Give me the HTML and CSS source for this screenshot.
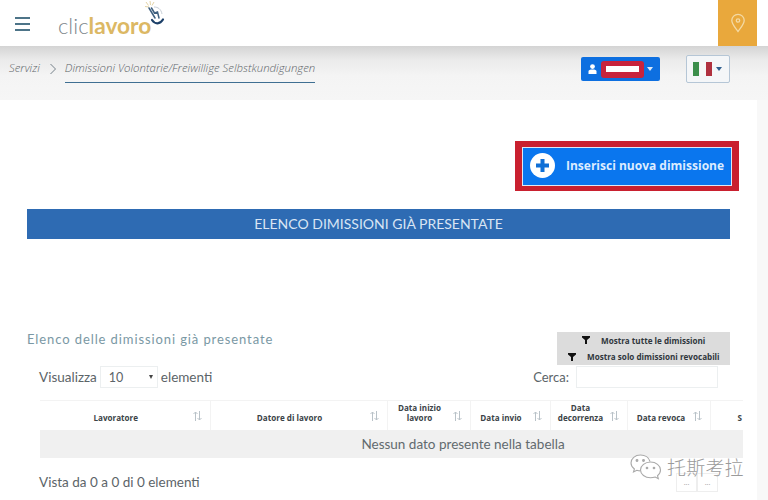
FILE: index.html
```html
<!DOCTYPE html>
<html lang="it">
<head>
<meta charset="utf-8">
<title>Cliclavoro</title>
<link rel="stylesheet" href="styles.css">
</head>
<body>
<header class="topbar">
  <button class="burger" aria-label="Menu"><span></span><span></span><span></span></button>
  <a class="logo"><span class="logo-clic">clic</span><span class="logo-lavoro">lavoro</span>
    <svg class="logo-mark" width="30" height="30" viewBox="0 0 30 30" fill="none">
      <path d="M10 1l.5 4M6 2l2.500 3.500M14 2l-2 3.500M5 6.500l4 .5" stroke="#e3d3a6" stroke-width="1"/>
      <path d="M9 8l6 10M11.500 8l3 5 3-1 1.500 6" stroke="#3f607f" stroke-width="1.500" stroke-linecap="round"/>
      <path d="M14 7c4 0 7 2 8 7" stroke="#c6ced6" stroke-width="1"/>
      <path d="M12 20c3 4.500 8 4.500 11-.5" stroke="#1c3f68" stroke-width="2.200" stroke-linecap="round"/>
    </svg>
  </a>
  <div class="pin">
    <svg width="16" height="20" viewBox="0 0 16 20" fill="none" stroke="#f3d9a4" stroke-width="1.300"><path d="M8 18.500C5 14.500 1.800 11 1.800 7.500a6.200 6.200 0 0 1 12.400 0C14.200 11 11 14.500 8 18.500z"/><circle cx="8" cy="7.500" r="1.700"/></svg>
  </div>
</header>

<nav class="crumbs">
  <span class="crumb-root">Servizi</span>
  <svg class="crumb-sep" width="8" height="12" viewBox="0 0 8 12" fill="none" stroke="#75818a" stroke-width="1"><path d="M1.500 1l5 5-5 5"/></svg>
  <span class="crumb-current">Dimissioni Volontarie/Freiwillige Selbstkundigungen</span>
  <div class="crumb-actions">
    <div class="user-btn">
      <svg width="9" height="10" viewBox="0 0 9 10" fill="#fff"><circle cx="4.500" cy="2.600" r="2.400"/><path d="M0.500 10V7.500C0.500 6 2 5.500 4.500 5.500S8.500 6 8.500 7.500V10z"/></svg>
      <span class="user-mask"><span class="user-mask-bar"></span></span>
      <span class="caret caret-white"></span>
    </div>
    <div class="flag-btn">
      <span class="flag"><span class="flag-g"></span><span class="flag-w"></span><span class="flag-r"></span></span>
      <span class="caret caret-dark"></span>
    </div>
  </div>
</nav>

<main class="content">
  <div class="action-row">
    <div class="new-frame">
      <button class="new-btn">
        <svg width="25" height="25" viewBox="0 0 25 25"><circle cx="12.500" cy="12.500" r="12.500" fill="#fff"/><path d="M12.500 6v13M6 12.500h13" stroke="#0f6fd6" stroke-width="4"/></svg>
        <span>Inserisci nuova dimissione</span>
      </button>
    </div>
  </div>

  <h1 class="band">ELENCO DIMISSIONI GIÀ PRESENTATE</h1>

  <div class="list-head">
    <h2 class="list-title">Elenco delle dimissioni già presentate</h2>
    <div class="filters">
      <div class="filter filter-a">
        <svg width="8" height="8" viewBox="0 0 8 8" fill="#111"><path d="M0 0h8v1.500L5 4v4H3V4L0 1.500z"/></svg>
        <span>Mostra tutte le dimissioni</span>
      </div>
      <div class="filter filter-b">
        <svg width="8" height="8" viewBox="0 0 8 8" fill="#111"><path d="M0 0h8v1.500L5 4v4H3V4L0 1.500z"/></svg>
        <span>Mostra solo dimissioni revocabili</span>
      </div>
    </div>
  </div>

  <div class="controls">
    <label class="ctl">Visualizza <span class="fake-select"><span>10</span><i class="mini-caret"></i></span> elementi</label>
    <label class="ctl ctl-search">Cerca: <span class="fake-input"></span></label>
  </div>

  <div class="table-wrap">
    <table class="grid">
      <colgroup>
        <col class="c1"><col class="c2"><col class="c3"><col class="c4"><col class="c5"><col class="c6"><col class="c7"><col class="c8">
      </colgroup>
      <thead>
        <tr>
          <th class="t1"><span>Lavoratore</span><svg class="sort" width="9" height="10" viewBox="0 0 9 10" fill="none" stroke="#b9c2c8"><path d="M2.500 10V1M.5 3l2-2 2 2M6.500 0v9M4.500 7l2 2 2-2"/></svg></th>
          <th class="t2"><span>Datore di lavoro</span><svg class="sort" width="9" height="10" viewBox="0 0 9 10" fill="none" stroke="#b9c2c8"><path d="M2.500 10V1M.5 3l2-2 2 2M6.500 0v9M4.500 7l2 2 2-2"/></svg></th>
          <th class="t3"><span>Data inizio<br>lavoro</span><svg class="sort" width="9" height="10" viewBox="0 0 9 10" fill="none" stroke="#b9c2c8"><path d="M2.500 10V1M.5 3l2-2 2 2M6.500 0v9M4.500 7l2 2 2-2"/></svg></th>
          <th class="t4"><span>Data invio</span><svg class="sort" width="9" height="10" viewBox="0 0 9 10" fill="none" stroke="#b9c2c8"><path d="M2.500 10V1M.5 3l2-2 2 2M6.500 0v9M4.500 7l2 2 2-2"/></svg></th>
          <th class="t5"><span>Data<br>decorrenza</span><svg class="sort" width="9" height="10" viewBox="0 0 9 10" fill="none" stroke="#b9c2c8"><path d="M2.500 10V1M.5 3l2-2 2 2M6.500 0v9M4.500 7l2 2 2-2"/></svg></th>
          <th class="t6"><span>Data revoca</span><svg class="sort" width="9" height="10" viewBox="0 0 9 10" fill="none" stroke="#b9c2c8"><path d="M2.500 10V1M.5 3l2-2 2 2M6.500 0v9M4.500 7l2 2 2-2"/></svg></th>
          <th class="t7"><span>S</span></th>
          <th class="t8"></th>
        </tr>
      </thead>
      <tbody>
        <tr><td colspan="8">Nessun dato presente nella tabella</td></tr>
      </tbody>
    </table>
  </div>

  <div class="foot">
    <span>Vista da 0 a 0 di 0 elementi</span>
    <div class="pager"><span>...</span><span>...</span></div>
  </div>
</main>

<div class="watermark">
  <svg width="32" height="26" viewBox="0 0 32 26" fill="#fff" stroke="#a9a9a9" stroke-width="1.100"><path d="M20 7.500C19 3.500 15 1 10.500 1 5 1 1 4.500 1 9c0 2.500 1.300 4.500 3.400 6l-.9 3 3.300-1.700c1.200.4 2.400.6 3.700.6"/><path d="M20.500 8c5.500 0 10 3.600 10 8 0 2.300-1.200 4.300-3 5.700l.8 3-3-1.700c-1.500.5-3.100.8-4.800.8-5.500 0-10-3.500-10-7.800S15 8 20.500 8z"/><circle cx="7" cy="6.500" r=".9" fill="#a9a9a9"/><circle cx="13.500" cy="6.500" r=".9" fill="#a9a9a9"/><circle cx="17" cy="14" r=".8" fill="#a9a9a9"/><circle cx="24" cy="14" r=".8" fill="#a9a9a9"/></svg>
  <span>托斯考拉</span>
</div>
</body>
</html>
```
FILE: styles.css
```css
* { box-sizing: border-box; }
html, body { height: 500px; overflow: hidden; }
body {
  margin: 0;
  position: relative;
  background: #f8f8f8;
  font-family: "Lato", "Liberation Sans", sans-serif;
  color: #5a6266;
}

/* top bar */
.topbar {
  display: flex;
  align-items: flex-start;
  height: 46px;
  padding-right: 11px;
  background: #fff;
}
.burger {
  display: flex;
  flex-direction: column;
  gap: 4px;
  width: 15px;
  margin: 17px 0 0 15px;
  padding: 0;
  border: 0;
  background: none;
}
.burger span { display: block; height: 2px; background: #4d7488; }
.logo {
  display: block;
  position: relative;
  margin: 12px 0 0 28px;
  font-size: 22px;
  line-height: 27px;
  white-space: nowrap;
}
.logo-clic { color: #80888d; font-weight: 300; }
.logo-lavoro { color: #dcb864; font-weight: 700; font-size: 22.700px; }
.logo-mark { position: absolute; left: 82px; top: -12px; }
.pin {
  margin-left: auto;
  width: 39px;
  height: 46px;
  background: #e9a83c;
  display: flex;
  align-items: center;
  justify-content: center;
}

/* breadcrumb */
.crumbs {
  display: flex;
  align-items: flex-start;
  height: 54px;
  padding: 0 38px 0 9px;
  background: linear-gradient(#d4d4d4 0, #ebebeb 14px, #f4f4f4 30px, #f6f6f6 100%);
  font-family: "Open Sans", sans-serif;
  font-style: italic;
  font-weight: 300;
  font-size: 11.400px;
  color: #5d6468;
}
.crumb-root { margin-top: 14px; }
.crumb-sep { margin: 17px 8px 0 9px; }
.crumb-current {
  margin-top: 14px;
  height: 23px;
  border-bottom: 1px solid #3f6f92;
  white-space: nowrap;
}
.crumb-actions {
  margin-left: auto;
  display: flex;
  align-items: center;
  gap: 26px;
  padding-top: 9px;
}
.user-btn {
  display: flex;
  align-items: center;
  width: 79px;
  height: 24px;
  padding-left: 7px;
  background: #0d6fe0;
  border-radius: 2px;
}
.user-mask {
  display: flex;
  align-items: center;
  justify-content: center;
  width: 43px;
  height: 17px;
  margin-left: 4px;
  background: #c8233c;
  border-radius: 3px;
}
.user-mask-bar { width: 33px; height: 6px; background: #fff; }
.caret {
  width: 0;
  height: 0;
  border-left: 3.500px solid transparent;
  border-right: 3.500px solid transparent;
  border-top: 4px solid;
}
.caret-white { color: #dce9f8; margin-left: 3px; }
.caret-dark { color: #2f5f8f; margin-left: 4px; }
.flag-btn {
  display: flex;
  align-items: center;
  width: 44px;
  height: 28px;
  padding-left: 6px;
  background: #f4f6f8;
  border: 1px solid #b5c6d6;
  border-radius: 2px;
}
.flag { display: flex; height: 14px; width: 19px; }
.flag span { flex: 1; }
.flag-g { background: #3c8f4c; }
.flag-w { background: #f7f7f7; }
.flag-r { background: #b0313f; }

/* content */
.content {
  height: 400px;
  margin-right: 11px;
  padding: 41px 0 0;
  background: #fff;
}
.action-row { display: flex; justify-content: flex-end; padding-right: 18px; }
.new-frame {
  padding: 6px 7px 5px;
  background: #c9202f;
}
.new-btn {
  display: flex;
  align-items: center;
  gap: 11px;
  width: 210px;
  height: 39px;
  padding: 0 0 3px 7px;
  border: 1px solid #dfe9f5;
  background: #0a76ee;
  color: #dcecff;
  font-family: "Open Sans", sans-serif;
  font-weight: 700;
  font-size: 12px;
  white-space: nowrap;
}
.band {
  margin: 18px 27px 0;
  height: 30px;
  line-height: 30px;
  background: #2e6bb3;
  color: #d9e5f3;
  text-align: center;
  font-weight: 400;
  font-size: 14px;
}
.list-head {
  display: flex;
  justify-content: space-between;
  align-items: flex-start;
  margin: 93px 27px 0;
}
.list-title {
  margin: 0;
  font-weight: 400;
  font-size: 13px;
  line-height: 14px;
  letter-spacing: .9px;
  color: #7a98a4;
}
.filters { width: 173px; background: #dcdcdc; }
.filter {
  display: flex;
  align-items: center;
  height: 16.500px;
  font-family: "Open Sans", sans-serif;
  font-weight: 700;
  font-size: 8.100px;
  color: #30373c;
  white-space: nowrap;
}
.filter svg { margin-right: 11px; }
.filter-a { padding-left: 25px; }
.filter-b { padding-left: 11px; }
.controls {
  display: flex;
  justify-content: space-between;
  margin: 1px 39px 0;
  font-size: 13.500px;
  color: #5c6468;
}
.ctl { display: flex; align-items: center; gap: 3px; height: 22px; }
.ctl-search { gap: 7px; font-size: 13px; }
.fake-select {
  position: relative;
  display: flex;
  align-items: center;
  width: 58px;
  height: 22px;
  padding-left: 8px;
  border: 1px solid #eceff0;
  font-size: 12.500px;
}
.mini-caret {
  position: absolute;
  right: 4px;
  top: 8px;
  border-left: 2.500px solid transparent;
  border-right: 2.500px solid transparent;
  border-top: 4px solid #444;
}
.fake-input { width: 142px; height: 22px; border: 1px solid #eceff0; }

.table-wrap {
  margin: 12px 25px 0 40px;
  width: 703px;
  overflow: hidden;
}
.grid {
  width: 846px;
  table-layout: fixed;
  border-collapse: collapse;
}
.c1 { width: 170px; }
.c2 { width: 177px; }
.c3 { width: 83px; }
.c4 { width: 80px; }
.c5 { width: 77px; }
.c6 { width: 83px; }
.c7 { width: 76px; }
.c8 { width: 100px; }
.grid th {
  position: relative;
  height: 29px;
  padding: 0 18px 4px 0;
  vertical-align: bottom;
  border-top: 1px solid #f3f3f3;
  border-right: 1px solid #f3f3f3;
  font-family: "Open Sans", sans-serif;
  font-weight: 700;
  font-size: 8.100px;
  line-height: 10px;
  color: #3b4347;
  text-align: center;
  white-space: nowrap;
}
.grid th.t4 { padding-right: 18px; }
.grid th.t5 { padding-right: 16px; }
.grid th.t6 { padding-right: 15px; }
.grid th.t7 { padding: 0 0 4px 27px; text-align: left; }
.grid th.t8 { padding-right: 0; }
.grid th span { display: block; padding-bottom: 3px; }
.sort { position: absolute; right: 8px; bottom: 9px; }
.grid td {
  height: 28px;
  background: #f0f0f0;
  text-align: center;
  font-size: 13.500px;
  color: #626a6e;
}
.foot {
  display: flex;
  justify-content: space-between;
  align-items: center;
  margin: 15px 39px 0 39px;
  font-size: 13.500px;
  color: #5c6468;
}
.pager { display: flex; }
.pager span {
  width: 21px;
  height: 19px;
  border: 1px solid #eeeeee;
  text-align: center;
  font-size: 8px;
  line-height: 17px;
  color: #aaa;
}

/* watermark over the page */
.watermark {
  position: absolute;
  left: 630px;
  top: 454px;
  display: flex;
  align-items: center;
  gap: 5px;
  font-family: "Noto Sans CJK SC", sans-serif;
  font-weight: 300;
  font-size: 19px;
  line-height: 20px;
  letter-spacing: .2px;
  color: #9a9a9a;
  text-shadow: 0 0 3px #fff;
}
```
